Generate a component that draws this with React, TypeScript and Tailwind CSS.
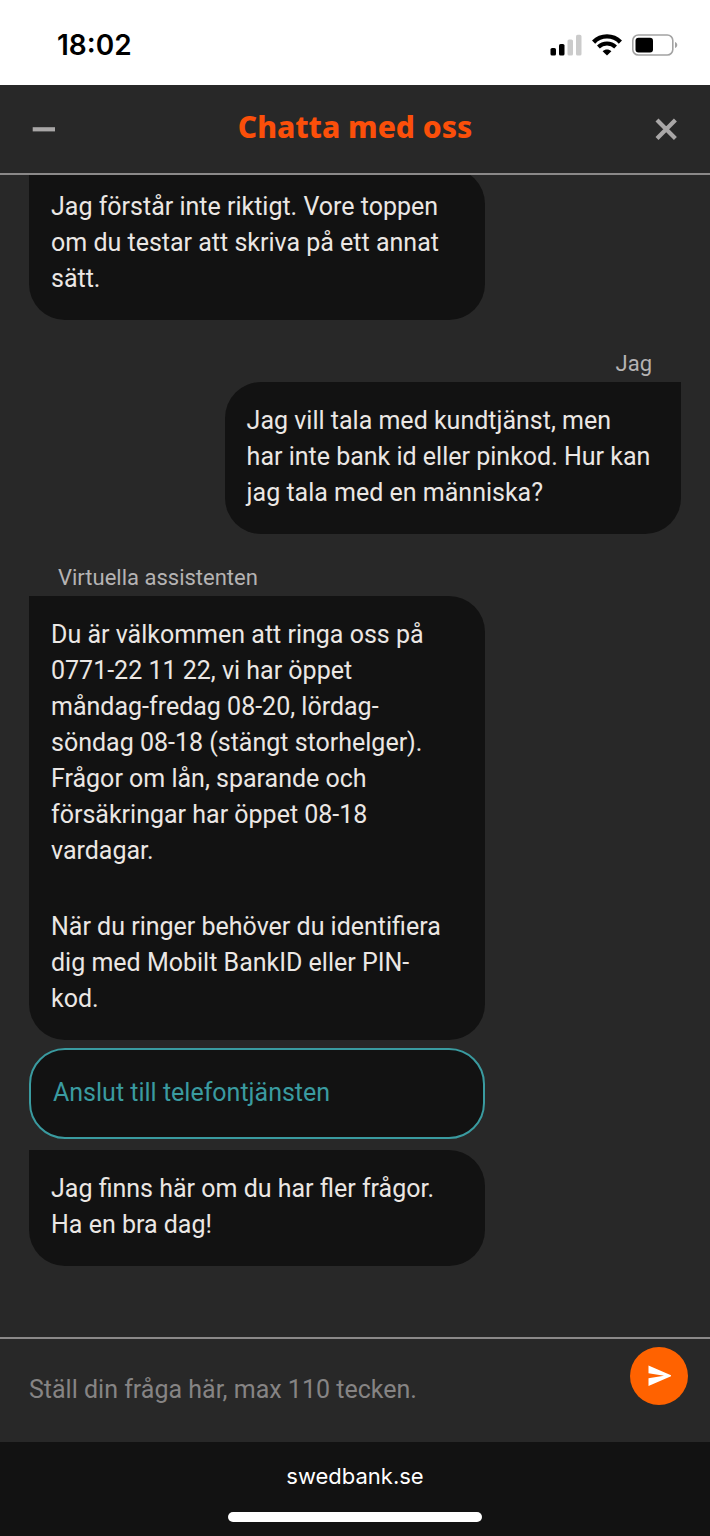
import { useState } from "react";

type Message = {
  id: number;
  from: "bot" | "user";
  label?: string;
  paragraphs: string[];
  link?: string;
};

const messages: Message[] = [
  {
    id: 1,
    from: "bot",
    paragraphs: ["Jag förstår inte riktigt. Vore toppen om du testar att skriva på ett annat sätt."],
  },
  {
    id: 2,
    from: "user",
    label: "Jag",
    paragraphs: ["Jag vill tala med kundtjänst, men\nhar inte bank id eller pinkod. Hur kan\njag tala med en människa?"],
  },
  {
    id: 3,
    from: "bot",
    label: "Virtuella assistenten",
    paragraphs: [
      "Du är välkommen att ringa oss på\n0771-22 11 22, vi har öppet\nmåndag-fredag 08-20, lördag-\nsöndag 08-18 (stängt storhelger).\nFrågor om lån, sparande och\nförsäkringar har öppet 08-18\nvardagar.",
      "När du ringer behöver du identifiera\ndig med Mobilt BankID eller PIN-\nkod.",
    ],
    link: "Anslut till telefontjänsten",
  },
  {
    id: 4,
    from: "bot",
    paragraphs: ["Jag finns här om du har fler frågor.\nHa en bra dag!"],
  },
];

function StatusBar() {
  return (
    <div className="flex h-[85px] shrink-0 items-center justify-between bg-white pr-8 pl-[57px] pb-1 pt-2">
      <span className="font-['Inter',sans-serif] text-[28px] leading-8 font-semibold text-black">18:02</span>
      <div className="flex items-center gap-[10px]">
        <svg className="h-[22px] w-8" viewBox="0 0 32 22">
          <rect x="0.5" y="14" width="5.5" height="7.5" rx="1.6" fill="#000" />
          <rect x="9" y="10" width="5.5" height="11.5" rx="1.6" fill="#000" />
          <rect x="17.5" y="5.5" width="5.5" height="16" rx="1.6" fill="#cbcbcb" />
          <rect x="26" y="0.8" width="5.5" height="20.7" rx="1.6" fill="#cbcbcb" />
        </svg>
        <svg className="h-[22px] w-[30px]" viewBox="0 0 30 22" fill="none" stroke="#000">
          <path d="M1.6 8.1C9 0.5 21 0.5 28.4 8.1" strokeWidth="4.4" />
          <path d="M6.4 13C11.2 8.4 18.8 8.4 23.6 13" strokeWidth="4" />
          <path d="M15 21.5L10.6 17.2C13.2 14.8 16.8 14.8 19.4 17.2Z" fill="#000" stroke="none" />
        </svg>
        <svg className="h-[22px] w-[46px]" viewBox="0 0 46 22">
          <rect x="0.8" y="1" width="40" height="20" rx="5.5" fill="none" stroke="#a3a3a3" strokeWidth="1.6" />
          <rect x="3.5" y="3.8" width="17.5" height="14.6" rx="3" fill="#000" />
          <path d="M43 8C46 8.8 46 13.2 43 14Z" fill="#a3a3a3" />
        </svg>
      </div>
    </div>
  );
}

function ChatMessage({ message }: { message: Message }) {
  const isUser = message.from === "user";

  return (
    <div className={`flex shrink-0 flex-col ${isUser ? "items-end" : "items-start"}`}>
      {message.label && (
        <span className="mt-[26px] px-[29px] text-[22px] leading-9 text-[#b5b3b3]">{message.label}</span>
      )}
      <div
        className={`flex w-[70%] flex-col gap-10 bg-[#121212] px-[22px] pt-[21px] pb-[23px] ${
          isUser ? "rounded-[36px] rounded-tr-none" : "rounded-[36px] rounded-tl-none"
        }`}
      >
        {message.paragraphs.map((text) => (
          <p key={text} className="whitespace-pre-line">
            {text}
          </p>
        ))}
      </div>
      {message.link && (
        <a
          href="#telefon"
          className="mt-2 mb-[11px] w-[70%] rounded-[36px] border-2 border-[#3a9ba0] bg-[#121212] px-[22px] pt-[25px] pb-[26px] text-[#3a9ba0]"
        >
          {message.link}
        </a>
      )}
    </div>
  );
}

export default function App() {
  const [question, setQuestion] = useState("");

  return (
    <div className="flex h-screen flex-col bg-[#282828] font-['Roboto',sans-serif] text-[25px] leading-9 text-[#ebe7e4]">
      <StatusBar />

      {/* Chat header */}
      <header className="flex h-[90px] shrink-0 items-center justify-between border-b-2 border-[#8b8989] px-8">
        <button type="button" aria-label="Minimera" className="text-[#a9a7a7]">
          <svg className="h-6 w-6" viewBox="0 0 24 24">
            <rect x="0.7" y="10.2" width="22.3" height="4.2" fill="currentColor" />
          </svg>
        </button>
        <h1 className="pb-1 font-['Noto_Sans',sans-serif] text-[30px] leading-9 font-extrabold text-[#fb4f0a]">Chatta med oss</h1>
        <button type="button" aria-label="Stäng" className="text-[#a9a7a7]">
          <svg className="h-6 w-6" viewBox="0 0 24 24" stroke="currentColor" strokeWidth="4.2">
            <path d="M3 3L21.4 21.4M21.4 3L3 21.4" />
          </svg>
        </button>
      </header>

      {/* Conversation, pinned to the latest message */}
      <main className="flex min-h-0 flex-1 flex-col justify-end overflow-hidden px-[29px] pb-[71px]">
        {messages.map((message) => (
          <ChatMessage key={message.id} message={message} />
        ))}
      </main>

      {/* Question field */}
      <form
        onSubmit={(e) => e.preventDefault()}
        className="flex h-[105px] shrink-0 items-start gap-4 border-t-2 border-[#8b8989] pr-[22px] pl-[29px]"
      >
        <input
          type="text"
          aria-label="Ställ din fråga"
          maxLength={110}
          value={question}
          onChange={(e) => setQuestion(e.target.value)}
          placeholder="Ställ din fråga här, max 110 tecken."
          className="h-full min-w-0 flex-1 bg-transparent pb-[2px] outline-none placeholder:text-[#868484]"
        />
        <button
          type="submit"
          aria-label="Skicka"
          className="mt-2 flex size-[58px] shrink-0 items-center justify-center rounded-full bg-[#ff6200] text-white"
        >
          <svg className="h-6 w-6" viewBox="0 0 24 24" fill="currentColor">
            <path d="M1.5 1.5L25 11.7L1.5 22V14.2L17 11.7L1.5 9.3Z" />
          </svg>
        </button>
      </form>

      {/* Browser bar */}
      <footer className="flex h-[94px] shrink-0 flex-col items-center justify-between bg-[#121212] pt-[18px] pb-[14px]">
        <span className="font-['Inter',sans-serif] text-[22px] leading-8 text-white">swedbank.se</span>
        <div className="h-[10px] w-[254px] rounded-full bg-white" />
      </footer>
    </div>
  );
}
